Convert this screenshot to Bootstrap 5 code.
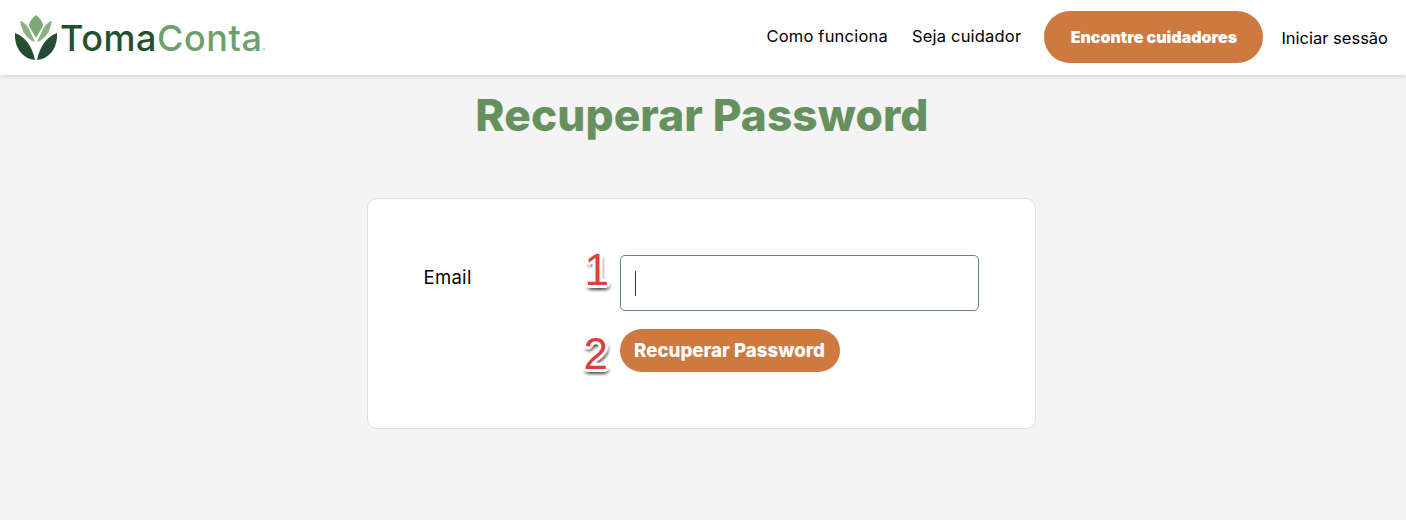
<!DOCTYPE html>
<html lang="pt">
<head>
  <meta charset="UTF-8">
  <title>Recuperar Password</title>
  <link href="https://cdn.jsdelivr.net/npm/bootstrap@5.3.0/dist/css/bootstrap.min.css" rel="stylesheet">
  <script src="https://cdn.jsdelivr.net/npm/bootstrap@5.3.0/dist/js/bootstrap.bundle.min.js"></script>
  <style>
    body {
      font-family: Inter, "Liberation Sans", sans-serif;
      background-color: #f4f4f4;
      color: #000;
      height: 520px;
      overflow: hidden;
    }
    .top-bar {
      height: 75px;
      background: #fff;
      box-shadow: 0 1px 5px rgba(0, 0, 0, .16);
      padding: 0 18px 0 15px;
    }
    .brand-name {
      font-family: Inter, sans-serif;
      font-size: 36px;
      font-weight: 500;
      letter-spacing: .55px;
      line-height: 1;
      color: #6f9f70;
      text-decoration: none;
      gap: 3px;
    }
    .brand-name b { color: #234f30; font-weight: 500; }
    .brand-name sup { font-size: 4px; top: 0; vertical-align: baseline; }
    .top-link {
      font-size: 16.5px;
      letter-spacing: .2px;
      color: #000;
      text-decoration: none;
    }
    .link-low { padding-top: 2px; letter-spacing: 0; }
    .link-high { padding-bottom: 2px; }
    .btn-orange {
      background: #cd793f;
      color: #fff;
      font-weight: 900;
      border: 0;
      border-radius: 26px;
    }
    .btn-orange:hover { background: #c06f38; color: #fff; }
    .btn-find { width: 219px; height: 52px; font-size: 16px; padding: 0; margin: -1px 18px 1px 23px; }
    .btn-send { width: 220px; height: 43px; font-size: 18.7px; font-weight: 800; padding: 2px 0 0; }
    .page-title {
      font-size: 44.2px;
      font-weight: 800;
      color: #66915f;
      margin: 15px 0 0 -2px;
      line-height: 50px;
      letter-spacing: .1px;
    }
    .form-box {
      width: 669px;
      height: 231px;
      margin: 58px 0 0 -4px;
      background: #fff;
      border: 1px solid #dedede;
      border-radius: 10px;
      padding: 56px 56px 0;
    }
    .field-label { width: 196px; padding-top: 9px; font-size: 18.5px; letter-spacing: .3px; }
    .field-wrap { width: 359px; }
    .field-box {
      height: 56px;
      border: 1px solid #5f8a80;
      border-radius: 5px;
      padding-left: 14px;
    }
    .caret-line { width: 1px; height: 25px; background: #2c3e3a; }
    .send-row { margin-top: 18px; }
    .step-mark {
      position: absolute;
      font-family: "Liberation Sans", sans-serif;
      font-size: 44px;
      line-height: 44px;
      color: #dc3f3f;
      text-shadow: 3px 0 0 #fff, -3px 0 0 #fff, 0 3px 0 #fff, 0 -3px 0 #fff, 2px 2px 0 #fff, -2px 2px 0 #fff, 2px -2px 0 #fff, -2px -2px 0 #fff, 2px 5px 3px rgba(0, 0, 0, .45), -1px 5px 3px rgba(0, 0, 0, .35), 4px 3px 3px rgba(0, 0, 0, .3);
    }
    .mark-one { top: -7px; left: -35px; }
    .mark-two { top: 3px; left: -36px; }
  </style>
</head>
<body>
  <nav class="top-bar d-flex align-items-center justify-content-between position-relative">
    <a href="#" class="brand-name d-flex align-items-center">
      <svg width="42" height="45" viewBox="0 0 42 45" aria-hidden="true">
        <path d="M21 0 C25 3 28 7 28 11 L21 23 L14 11 C14 7 17 3 21 0 Z" fill="#7fa878"/>
        <path d="M5 6 C9 7 12 10 14 14 L20 27 C13 25 7 18 5 6 Z" fill="#8db184"/>
        <path d="M37 6 C33 7 30 10 28 14 L22 27 C29 25 35 18 37 6 Z" fill="#8db184"/>
        <path d="M0 18 C9 21 17 30 20 45 C8 44 -1 33 0 18 Z" fill="#234f30"/>
        <path d="M42 18 C33 21 25 30 22 45 C34 44 43 33 42 18 Z" fill="#234f30"/>
      </svg>
      <span><b>Toma</b>Conta<sup>®</sup></span>
    </a>
    <div class="d-flex align-items-center">
      <a href="#" class="top-link link-high me-4">Como funciona</a>
      <a href="#" class="top-link link-high">Seja cuidador</a>
      <a href="#" class="btn btn-orange btn-find d-flex align-items-center justify-content-center">Encontre cuidadores</a>
      <a href="#" class="top-link link-low">Iniciar sessão</a>
    </div>
  </nav>

  <main class="d-flex flex-column align-items-center">
    <h1 class="page-title">Recuperar Password</h1>
    <form class="form-box d-flex" onsubmit="return false">
      <label class="field-label">Email</label>
      <div class="field-wrap">
        <div class="position-relative">
          <span class="step-mark mark-one">1</span>
          <div class="field-box d-flex align-items-center"><span class="caret-line"></span></div>
        </div>
        <div class="position-relative send-row">
          <span class="step-mark mark-two">2</span>
          <button class="btn btn-orange btn-send" type="submit">Recuperar Password</button>
        </div>
      </div>
    </form>
  </main>
</body>
</html>
